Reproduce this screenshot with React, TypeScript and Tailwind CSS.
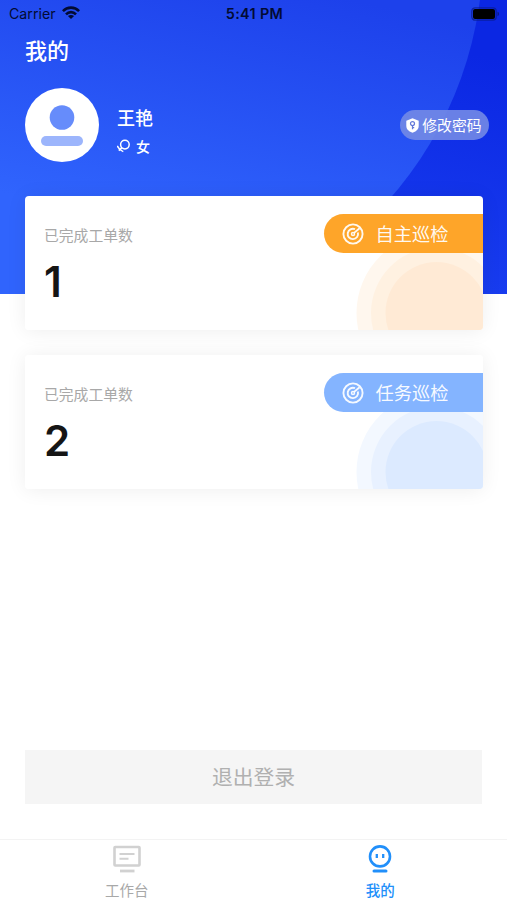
import type { ReactNode } from "react";

function Wifi() {
  return (
    <svg className="ml-[6px] h-[14px] w-[18px]" viewBox="0 0 18 14" fill="none" stroke="#020b33" strokeWidth="2.6">
      <path d="M0.9 5.1C5.3 0.5 12.7 0.5 17.1 5.1" />
      <path d="M4 8.3C6.8 5.4 11.2 5.4 14 8.3" />
      <path d="M9 13L5.9 10C7.6 8.5 10.4 8.5 12.1 10Z" fill="#020b33" stroke="none" />
    </svg>
  );
}

function Battery() {
  return (
    <svg className="h-[14px] w-[29px]" viewBox="0 0 29 14">
      <rect x="0.8" y="0.8" width="24.4" height="12.4" rx="3.4" fill="none" stroke="#0a1b8c" strokeOpacity="0.75" strokeWidth="1.3" />
      <rect x="2" y="2" width="22" height="10" rx="2" fill="#000" />
      <path d="M26.5 4.8C28.6 5.4 28.6 8.6 26.5 9.2Z" fill="#0a1b8c" />
    </svg>
  );
}

function Target() {
  return (
    <svg className="h-[22px] w-[22px]" viewBox="0 0 22 22" fill="none" stroke="#fff" strokeOpacity="0.92" strokeWidth="1.9">
      <circle cx="11" cy="11" r="9.6" />
      <path d="M15.9 9.6A5.2 5.2 0 1 1 13 6.2" />
      <path d="M12.1 9.9L17.6 5.2" />
      <circle cx="11" cy="11" r="1.5" strokeWidth="1.5" />
    </svg>
  );
}

interface CardProps {
  count: number;
  title: string;
  ribbon: string;
  rings: [string, string, string];
}

function StatCard({ count, title, ribbon, rings }: CardProps) {
  return (
    <section className="relative flex h-[134px] justify-between overflow-hidden rounded-[4px] bg-white">
      <svg className="absolute right-0 bottom-0 h-[112px] w-[134px]" viewBox="0 0 134 112">
        <circle cx="87.5" cy="95" r="80" fill={rings[0]} />
        <circle cx="87.5" cy="95" r="65.5" fill={rings[1]} />
        <circle cx="87.5" cy="95" r="51" fill={rings[2]} />
      </svg>
      <div className="pt-[29px] pl-[19px]">
        <p className="text-[14.8px] leading-[20px] text-[#a8a8a8]">已完成工单数</p>
        <p className="mt-[13px] font-['Inter'] text-[42px] leading-[48px] font-semibold text-[#151515]">{count}</p>
      </div>
      <div className={`relative mt-[18px] flex h-[39px] w-[159px] items-center rounded-l-full pl-[18px] text-[18.3px] text-white/95 ${ribbon}`}>
        <Target />
        <span className="-mt-[1px] ml-[12px] leading-[24px]">{title}</span>
      </div>
    </section>
  );
}

function Tab({ label, color, children }: { label: string; color: string; children: ReactNode }) {
  return (
    <button className={`flex flex-1 flex-col items-center pt-[5px] text-[14.5px] ${color}`}>
      {children}
      <span className="mt-[6px] leading-[20px]">{label}</span>
    </button>
  );
}

export default function App() {
  return (
    <main className="relative flex h-[900px] w-[507px] flex-col overflow-hidden bg-white font-['Noto_Sans_CJK_SC',sans-serif]">
      <svg className="absolute top-0 left-0 h-[294px] w-[507px]" viewBox="0 0 507 294">
        <defs>
          <linearGradient id="sky" gradientUnits="userSpaceOnUse" x1="310" y1="-10" x2="250" y2="250">
            <stop offset="0" stopColor="#1d41eb" />
            <stop offset="1" stopColor="#3064fd" />
          </linearGradient>
          <linearGradient id="deep" gradientUnits="userSpaceOnUse" x1="500" y1="60" x2="440" y2="300">
            <stop offset="0" stopColor="#0b27e3" />
            <stop offset="1" stopColor="#193ef0" />
          </linearGradient>
        </defs>
        <rect width="507" height="294" fill="url(#deep)" />
        <circle cx="110" cy="-48" r="373" fill="url(#sky)" />
        <rect y="190" width="200" height="104" fill="url(#sky)" />
      </svg>

      <div className="relative grid h-[27px] grid-cols-3 items-center pr-[7px] pl-[9px] font-['Inter'] text-[#020b33]">
        <div className="flex items-center text-[14.2px]">
          Carrier
          <Wifi />
        </div>
        <time className="text-center text-[14.4px] font-semibold tracking-[0.35px]">5:41 PM</time>
        <div className="flex justify-end"><Battery /></div>
      </div>

      <h1 className="relative mt-[7px] ml-[25px] text-[22px] leading-[30px] font-medium text-white">我的</h1>

      <div className="relative mt-[24px] flex h-[74px] items-center pr-[18.5px] pl-[25px] text-white">
        <svg className="h-[74px] w-[74px]" viewBox="0 0 74 74">
          <circle cx="37" cy="37" r="37" fill="#fff" />
          <circle cx="37" cy="29.5" r="12.3" fill="#668cfb" />
          <rect x="16" y="48" width="42" height="10" rx="5" fill="#9cb5fc" />
        </svg>
        <div className="ml-[18px] flex flex-col pt-[11px]">
          <span className="text-[18px] leading-[26px] font-medium">王艳</span>
          <span className="mt-[5px] flex items-center text-[14px] leading-[22px] font-medium">
            <svg className="mr-[5px] h-[14px] w-[14px]" viewBox="0 0 14 14" fill="none" stroke="#fff" strokeWidth="1.5">
              <circle cx="7.9" cy="5.6" r="4.3" />
              <path d="M4.9 8.6L1.8 11.6M0.3 6.9C1.6 9.8 3.2 11.6 6.3 12.6" />
            </svg>
            女
          </span>
        </div>
        <button className="ml-auto flex h-[30px] items-center rounded-full bg-[#738ae5]/90 pr-[7px] pl-[6px] text-[14.8px] leading-[22px]">
          <svg className="mr-[3.5px] h-[15px] w-[13px]" viewBox="0 0 13 15">
            <path d="M6.5 0.3L12.7 2.7V8C12.7 11.5 9.5 13.8 6.5 14.8C3.5 13.8 0.3 11.5 0.3 8V2.7Z" fill="#fff" />
            <circle cx="6.5" cy="5.6" r="2" fill="none" stroke="#6379d8" strokeWidth="1.2" />
            <path d="M6.5 7.5V11.3M6.5 9.7H8.2" stroke="#6379d8" strokeWidth="1.2" />
          </svg>
          修改密码
        </button>
      </div>

      <div className="relative mt-[34px] flex flex-col gap-[25px] pr-[24.5px] pl-[25px]">
        <div className="rounded-[4px] shadow-[0_1px_20px_rgba(0,0,0,0.07)]">
          <StatCard count={1} title="自主巡检" ribbon="bg-[#fea529]" rings={["#fff7ee", "#fff1e1", "#ffead5"]} />
        </div>
        <div className="rounded-[4px] shadow-[0_1px_20px_rgba(0,0,0,0.07)]">
          <StatCard count={2} title="任务巡检" ribbon="bg-[#84b4ff]" rings={["#f3f8ff", "#e8f1ff", "#dceaff"]} />
        </div>
      </div>

      <button className="mt-auto mr-[25px] mb-[35px] ml-[25px] h-[54px] bg-[#f5f5f5] text-[20.8px] text-[#b0b0b0]">退出登录</button>

      <nav className="flex h-[61px] border-t border-[#f3f3f3]">
        <Tab label="工作台" color="text-[#a8a8a8]">
          <svg className="h-[29px] w-[28px]" viewBox="0 0 28 29" fill="none" stroke="#d1d1d1" strokeWidth="2">
            <rect x="1.5" y="2" width="25" height="18.5" rx="0.7" strokeWidth="2.6" />
            <path d="M6.5 9H21.5M6.5 13.7H15.5" />
            <path d="M7 26H21.5" strokeWidth="2.8" />
          </svg>
        </Tab>
        <Tab label="我的" color="text-[#218ffa] font-medium">
          <svg className="h-[29px] w-[28px]" viewBox="0 0 28 29" fill="none" stroke="#218ffa" strokeWidth="2.6">
            <circle cx="14" cy="11.4" r="10" />
            <path d="M10.8 9V13M17.2 9V13" strokeWidth="2.3" />
            <path d="M8 26H20" strokeLinecap="round" strokeWidth="3" />
          </svg>
        </Tab>
      </nav>
    </main>
  );
}
